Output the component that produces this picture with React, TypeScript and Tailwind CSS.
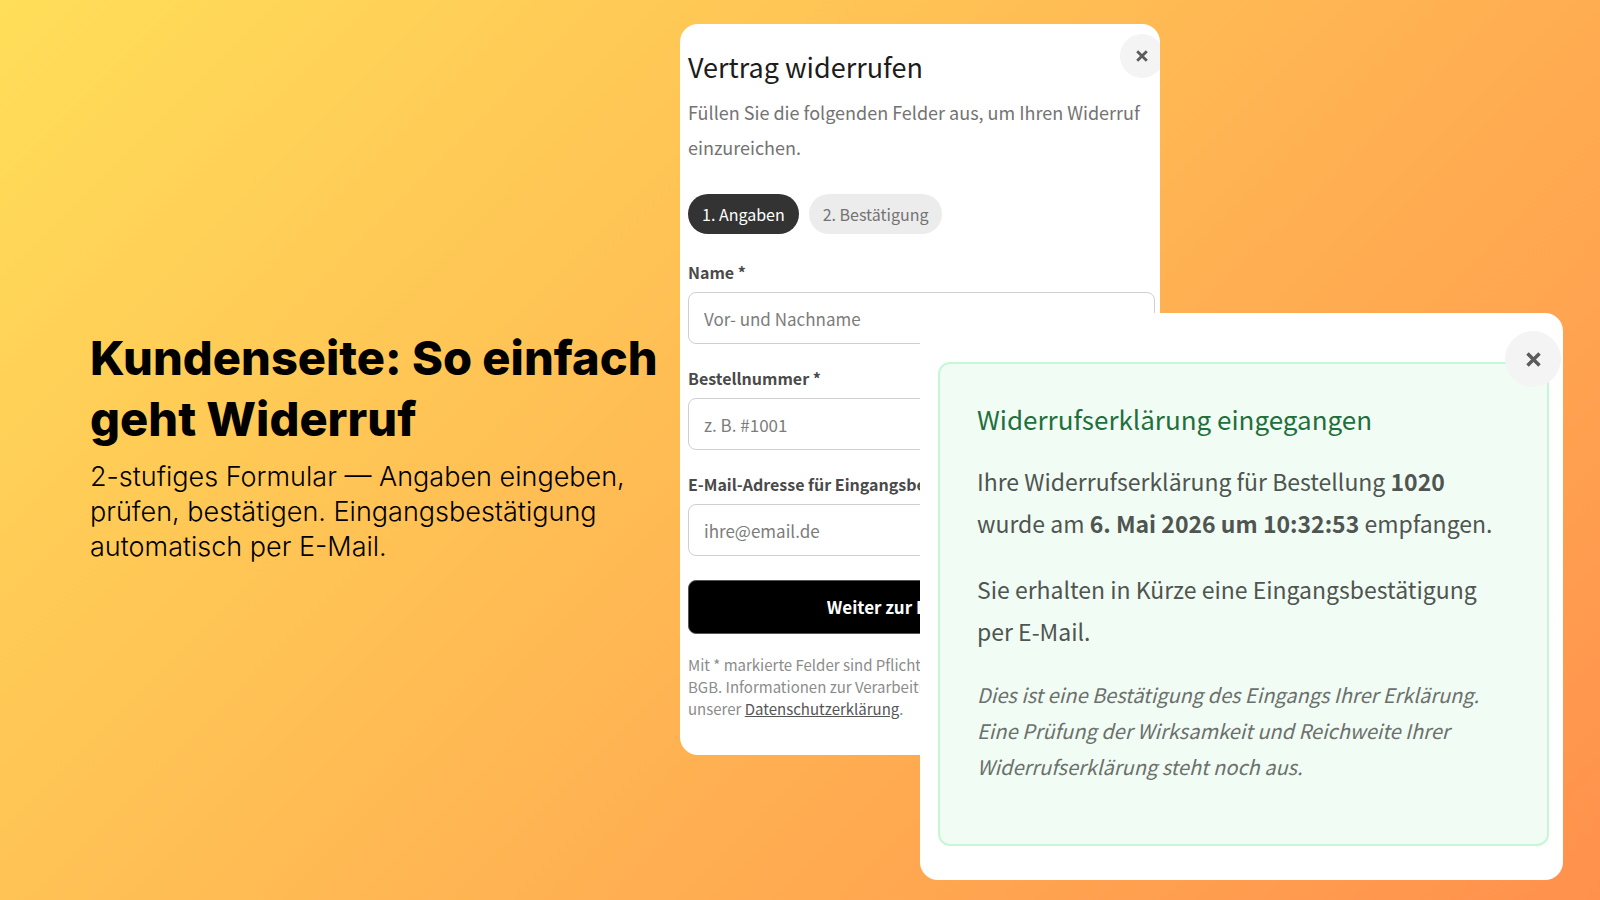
import React from 'react';

interface FieldProps {
  id: string;
  label: string;
  type?: string;
  placeholder: string;
}

interface CloseButtonProps {
  className: string;
  iconSize: number;
}

const steps = [
  { label: '1. Angaben', active: true },
  { label: '2. Bestätigung', active: false }
];

const fields: FieldProps[] = [
  { id: 'name', label: 'Name *', placeholder: 'Vor- und Nachname' },
  { id: 'order', label: 'Bestellnummer *', placeholder: 'z. B. #1001' },
  { id: 'email', label: 'E-Mail-Adresse für Eingangsbestätigung *', type: 'email', placeholder: 'ihre@email.de' }
];

const CloseButton: React.FC<CloseButtonProps> = ({ className, iconSize }) => (
  <button
    type="button"
    aria-label="Schließen"
    className={`absolute flex items-center justify-center rounded-full bg-[#f4f4f4] text-[#5c5c5c] ${className}`}
  >
    <svg width={iconSize} height={iconSize} viewBox="0 0 12 12" fill="none" stroke="currentColor" strokeWidth="2.8">
      <path d="M1.2 1.2 10.8 10.8M10.8 1.2 1.2 10.8" />
    </svg>
  </button>
);

const Field: React.FC<FieldProps> = ({ id, label, type = 'text', placeholder }) => (
  <div>
    <label htmlFor={id} className="block mb-2.5 text-base leading-5 font-bold text-[#4a4a4a] whitespace-nowrap">
      {label}
    </label>
    <input
      id={id}
      type={type}
      placeholder={placeholder}
      className="block w-full h-[52px] px-[15px] rounded-lg border border-[#cfcfcf] bg-white text-[17px] text-gray-800 placeholder:text-[#7c7c7c]"
    />
  </div>
);

const WithdrawalForm: React.FC = () => (
  <section className="relative col-start-2 col-span-2 row-start-1 self-start overflow-hidden rounded-[18px] bg-white pt-[23px] pb-[35px] pl-2 pr-[5px]">
    <CloseButton className="top-2.5 -right-1 size-11" iconSize={12} />
    <h2 className="text-[27px] leading-10 text-[#1c1c1c]">Vertrag widerrufen</h2>
    <p className="mt-2 text-lg leading-[35px] text-[#737373] whitespace-nowrap">
      Füllen Sie die folgenden Felder aus, um Ihren Widerruf
      <br />
      einzureichen.
    </p>

    <ol className="mt-[29px] flex gap-2.5">
      {steps.map((step) => (
        <li
          key={step.label}
          className={`rounded-full px-3.5 text-base leading-10 ${
            step.active ? 'bg-[#333333] text-white' : 'bg-[#ececec] text-[#737373]'
          }`}
        >
          {step.label}
        </li>
      ))}
    </ol>

    <form className="mt-7 flex flex-col gap-6" onSubmit={(e) => e.preventDefault()}>
      {fields.map((field) => (
        <Field key={field.id} {...field} />
      ))}
      <button type="submit" className="h-[54px] rounded-lg border border-[#555555] bg-black text-[17px] font-bold text-white">
        Weiter zur Bestätigung
      </button>
    </form>

    <p className="mt-5 text-[15px] leading-[22px] text-[#8c8c8c] whitespace-nowrap">
      Mit * markierte Felder sind Pflichtfelder gem. § 356a
      <br />
      BGB. Informationen zur Verarbeitung finden Sie in
      <br />
      unserer{' '}
      <a href="#datenschutz" className="text-[#555555] underline">
        Datenschutzerklärung
      </a>
      .
    </p>
  </section>
);

const Confirmation: React.FC = () => (
  <section className="relative z-10 col-start-3 col-span-2 row-start-1 self-start mt-[289px] rounded-[18px] bg-white pt-[49px] pb-[34px] pl-[18px] pr-[14px]">
    <CloseButton className="top-[18px] right-[2px] size-14" iconSize={15} />
    <div className="rounded-xl border-2 border-[#c6f7d5] bg-[#f1fcf4] pt-[35px] pb-[59px] pl-[37px] pr-5 text-[#4f5551]">
      <h2 className="text-[26px] leading-10 text-[#1f703c]">Widerrufserklärung eingegangen</h2>
      <p className="mt-[21px] text-[23px] leading-[42px]">
        Ihre Widerrufserklärung für Bestellung <strong>1020</strong>
        <br />
        wurde am <strong>6. Mai 2026 um 10:32:53</strong> empfangen.
      </p>
      <p className="mt-6 text-[23px] leading-[42px]">
        Sie erhalten in Kürze eine Eingangsbestätigung
        <br />
        per E-Mail.
      </p>
      <p className="mt-[25px] text-xl leading-9 italic text-[#6b706d]">
        Dies ist eine Bestätigung des Eingangs Ihrer Erklärung.
        <br />
        Eine Prüfung der Wirksamkeit und Reichweite Ihrer
        <br />
        Widerrufserklärung steht noch aus.
      </p>
    </div>
  </section>
);

const App: React.FC = () => {
  return (
    <main className="grid min-h-screen grid-cols-[minmax(0,680fr)_minmax(0,240fr)_minmax(0,240fr)_minmax(0,403fr)_minmax(0,37fr)] bg-[linear-gradient(135deg,#ffde59,#ff914d)] pt-6 pb-5 font-['Noto_Sans_CJK_SC','Open_Sans',sans-serif]">
      <div className="col-start-1 row-start-1 self-center pb-3.5 pl-[90px] font-['Inter',sans-serif] text-black">
        <h1 className="text-[47px] leading-[61px] font-extrabold whitespace-nowrap">
          Kundenseite: So einfach
          <br />
          geht Widerruf
        </h1>
        <p className="mt-2.5 text-[27px] leading-[35px] font-light whitespace-nowrap">
          2-stufiges Formular — Angaben eingeben,
          <br />
          prüfen, bestätigen. Eingangsbestätigung
          <br />
          automatisch per E-Mail.
        </p>
      </div>
      <WithdrawalForm />
      <Confirmation />
    </main>
  );
};

export default App;
